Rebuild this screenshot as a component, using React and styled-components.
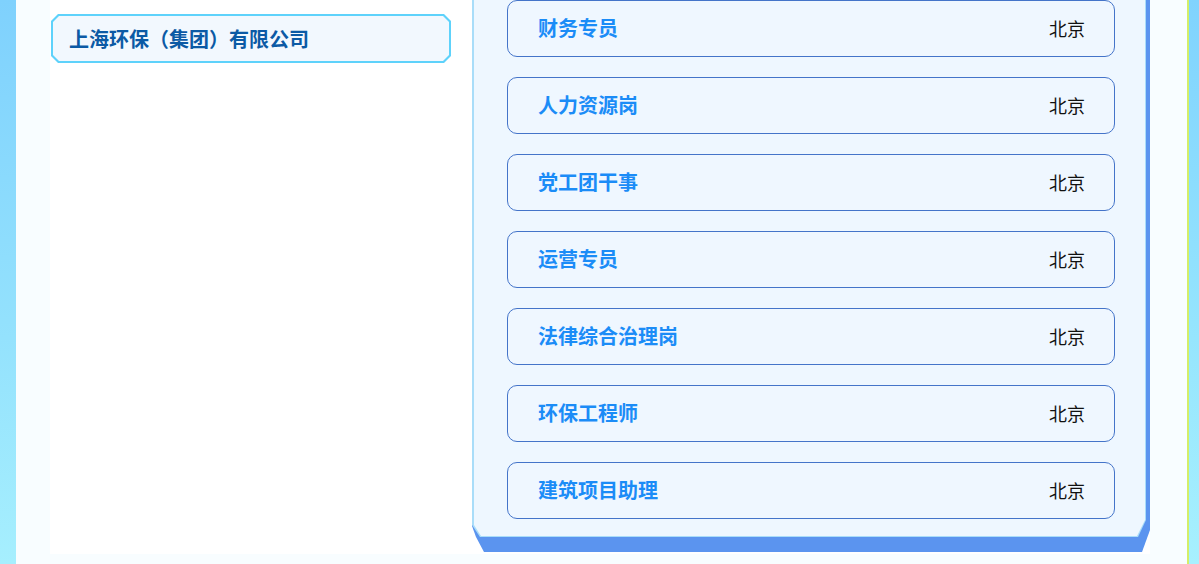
import React from "react";
import styled, { createGlobalStyle } from "styled-components";

const GlobalStyle = createGlobalStyle`
  html, body {
    margin: 0;
    padding: 0;
    height: 100%;
    overflow: hidden;
  }
  body {
    font-family: "Noto Sans CJK SC", "Noto Sans", sans-serif;
  }
`;

const jobs = [
  "财务专员",
  "人力资源岗",
  "党工团干事",
  "运营专员",
  "法律综合治理岗",
  "环保工程师",
  "建筑项目助理",
];

const App = () => {
  return (
    <>
      <GlobalStyle />
      <Page>
        <SideStrip />
        <Main>
          <Content>
            <LeftColumn>
              <CompanyBorder>
                <CompanyCard>上海环保（集团）有限公司</CompanyCard>
              </CompanyBorder>
            </LeftColumn>
            <PanelShadow>
              <PanelBorder>
                <PanelInner>
                  {jobs.map((job) => (
                    <JobCard key={job}>
                      <JobTitle>{job}</JobTitle>
                      <JobCity>北京</JobCity>
                    </JobCard>
                  ))}
                </PanelInner>
              </PanelBorder>
            </PanelShadow>
          </Content>
        </Main>
        <RightEdge />
      </Page>
    </>
  );
};

export default App;

const Page = styled.div`
  display: flex;
  width: 1199px;
  height: 564px;
`;

const SideStrip = styled.div`
  width: 16px;
  flex: none;
  background: linear-gradient(180deg, #7fd1fd 0%, #94e2fd 60%, #a6effe 100%);
`;

const RightEdge = styled.div`
  width: 12px;
  flex: none;
  border-left: 2px solid #d4ef68;
  box-sizing: border-box;
  background: linear-gradient(180deg, #80d3fd 0%, #96e5fd 60%, #a7f0fe 100%);
`;

const Main = styled.div`
  flex: 1;
  background: #f8fdff;
  padding: 0 0 10px 34px;
  box-sizing: border-box;
`;

const Content = styled.div`
  width: 1100px;
  height: 554px;
  background: #ffffff;
  display: grid;
  grid-template-columns: 422px 678px;
  align-items: start;
`;

const LeftColumn = styled.div`
  padding: 14px 0 0 1px;
`;

const chamfer = (c) => `polygon(
  ${c}px 0, calc(100% - ${c}px) 0, 100% ${c}px, 100% calc(100% - ${c}px),
  calc(100% - ${c}px) 100%, ${c}px 100%, 0 calc(100% - ${c}px), 0 ${c}px
)`;

const CompanyBorder = styled.div`
  width: 400px;
  height: 49px;
  background: #5ed2fb;
  padding: 2px;
  box-sizing: border-box;
  clip-path: ${chamfer(7)};
`;

const CompanyCard = styled.div`
  height: 100%;
  background: #f2f8fe;
  clip-path: ${chamfer(6)};
  display: flex;
  align-items: center;
  padding: 0 0 1px 16px;
  box-sizing: border-box;
  font-size: 20px;
  font-weight: 700;
  color: #0b5aa5;
`;

const PanelShadow = styled.div`
  height: 552px;
  background: #5b94ef;
  padding: 0 4px 15px 0;
  box-sizing: border-box;
  clip-path: polygon(
    0 0, 100% 0, 100% calc(100% - 22px), calc(100% - 8px) 100%,
    12px 100%, 4px calc(100% - 15px), 0 calc(100% - 26px)
  );
`;

const PanelBorder = styled.div`
  height: 100%;
  background: #a9ddf9;
  padding: 0 1px 1px 2px;
  box-sizing: border-box;
  clip-path: polygon(
    0 0, 100% 0, 100% calc(100% - 17px), calc(100% - 8px) 100%,
    8px 100%, 0 calc(100% - 12px)
  );
`;

const PanelInner = styled.div`
  height: 100%;
  background: #eef7ff;
  box-sizing: border-box;
  padding: 0 30px 0 33px;
  display: flex;
  flex-direction: column;
  gap: 20px;
  clip-path: polygon(
    0 0, 100% 0, 100% calc(100% - 16px), calc(100% - 8px) 100%,
    7px 100%, 0 calc(100% - 11px)
  );
`;

const JobCard = styled.div`
  height: 57px;
  flex: none;
  box-sizing: border-box;
  border: 1px solid #4474c9;
  border-radius: 10px;
  background: #eff7ff;
  display: flex;
  align-items: center;
  justify-content: space-between;
  padding: 0 29px 2px 30px;
`;

const JobTitle = styled.span`
  font-size: 20px;
  font-weight: 700;
  color: #1b8cf7;
`;

const JobCity = styled.span`
  font-size: 18px;
  color: #111111;
`;
